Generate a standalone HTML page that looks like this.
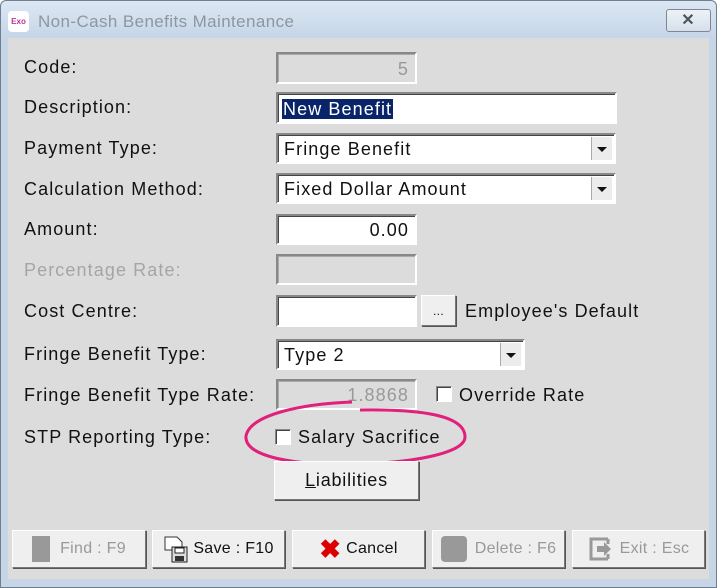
<!DOCTYPE html>
<html><head><style>
body{margin:0;width:717px;height:588px;overflow:hidden;background:#fff;font-family:"Liberation Sans",sans-serif;letter-spacing:1.1px;}
.win{position:absolute;left:0;top:0;width:715px;height:586px;border:1px solid #6f7f90;border-radius:6px 6px 0 0;background:#c7d6e6;}
.title{position:absolute;left:0;top:0;width:715px;height:38px;background:linear-gradient(#dce7f3,#c5d5e7);border-radius:6px 6px 0 0;}
.title span{position:absolute;left:37px;top:11px;font-size:17px;color:#8d96a1;letter-spacing:0.4px;}
.logo{position:absolute;left:7px;top:10px;width:21px;height:21px;background:#fff;border-radius:4px;font-size:8px;color:#c0309a;font-weight:bold;text-align:center;line-height:21px;letter-spacing:0}
.xb{position:absolute;left:665px;top:8px;width:43px;height:21px;border:1px solid #7b8797;border-radius:3px;background:linear-gradient(#eef2f7,#d6dfea);text-align:center;font-size:16px;line-height:21px;color:#4a5564;font-weight:bold;}
.body{position:absolute;left:8px;top:38px;width:701px;height:541px;background:#dcdcdc;}
.l{position:absolute;left:24px;font-size:18px;color:#111;}
.g{color:#a5a5a5;}
.f{position:absolute;box-sizing:border-box;background:#fff;border:2px solid;border-color:#888 #fff #fff #888;box-shadow:inset 1px 1px 0 #444;font-size:18px;line-height:28px;padding:0 6px;color:#111;}
.dis{background:#dcdcdc;color:#999;text-align:right;box-shadow:inset 1px 1px 0 #aaa;}
.dd{position:absolute;right:2px;top:2px;width:20px;height:23px;background:#ececec;border-left:1px solid #aaa;}
.dd:after{content:"";position:absolute;left:5px;top:10px;border-left:5px solid transparent;border-right:5px solid transparent;border-top:5px solid #111;}
.btn{position:absolute;box-sizing:border-box;background:#efefef;border:1px solid;border-color:#fff #777 #777 #fff;box-shadow:1px 1px 0 #555;font-size:16px;text-align:center;color:#111;letter-spacing:0.3px}
.cb{position:absolute;width:14px;height:14px;background:#fff;border:1px solid;border-color:#888 #fff #fff #888;box-shadow:inset 1px 1px 0 #444;}
.bb{top:530px;height:38px;line-height:36px;}
</style></head><body>
<div class="win">
<div class="title"><div class="logo">Exo</div><span>Non-Cash Benefits Maintenance</span><div class="xb">✕</div></div>
</div>
<div class="body"></div>
<div class="l" style="top:57px">Code:</div>
<div class="f dis" style="left:276px;top:52px;width:141px;height:32px;line-height:30px">5</div>
<div class="l" style="top:97px">Description:</div>
<div class="f" style="left:276px;top:92px;width:341px;height:32px;padding-left:4px;line-height:30px"><span style="background:#0a246a;color:#fff;padding:0 1px">New Benefit</span></div>
<div class="l" style="top:138px">Payment Type:</div>
<div class="f" style="left:276px;top:133px;width:340px;height:31px">Fringe Benefit<div class="dd"></div></div>
<div class="l" style="top:179px">Calculation Method:</div>
<div class="f" style="left:276px;top:173px;width:340px;height:31px">Fixed Dollar Amount<div class="dd"></div></div>
<div class="l" style="top:219px">Amount:</div>
<div class="f" style="left:276px;top:214px;width:141px;height:31px;text-align:right">0.00</div>
<div class="l g" style="top:260px">Percentage Rate:</div>
<div class="f dis" style="left:276px;top:254px;width:141px;height:31px"></div>
<div class="l" style="top:301px">Cost Centre:</div>
<div class="f" style="left:276px;top:295px;width:141px;height:32px"></div>
<div class="btn" style="left:421px;top:295px;width:35px;height:31px;line-height:30px;font-size:12px">...</div>
<div class="l" style="left:465px;top:301px">Employee's Default</div>
<div class="l" style="top:344px">Fringe Benefit Type:</div>
<div class="f" style="left:276px;top:339px;width:249px;height:31px">Type 2<div class="dd"></div></div>
<div class="l" style="top:385px">Fringe Benefit Type Rate:</div>
<div class="f dis" style="left:276px;top:379px;width:141px;height:31px">1.8868</div>
<div class="cb" style="left:436px;top:386px"></div>
<div class="l" style="left:459px;top:385px">Override Rate</div>
<div class="l" style="top:427px">STP Reporting Type:</div>
<div class="cb" style="left:275px;top:429px"></div>
<div class="l" style="left:298px;top:427px">Salary Sacrifice</div>
<svg style="position:absolute;left:0;top:0" width="717" height="588"><path d="M352,402 C300,404 250,415 246,436 C244,458 300,466 360,464 C420,462 465,452 465,437 C465,415 420,409 360,410" fill="none" stroke="#e0207a" stroke-width="3"/></svg>
<div class="btn" style="left:274px;top:461px;width:145px;height:39px;line-height:37px;font-size:18px;letter-spacing:0.8px"><u>L</u>iabilities</div>
<div class="btn bb" style="left:12px;width:134px;color:#999"><span style="display:inline-block;width:18px;height:26px;background:#999;vertical-align:middle;margin-right:10px"></span>Find : F9</div>
<div class="btn bb" style="left:152px;width:133px"><svg width="26" height="28" style="vertical-align:middle;margin-right:4px"><path d="M2,2h12l5,5v8H2z" fill="#fff" stroke="#333"/><rect x="9" y="12" width="15" height="15" fill="#ddd" stroke="#222"/><rect x="12" y="13" width="9" height="5" fill="#fff" stroke="#222"/><rect x="12" y="21" width="9" height="5" fill="#333"/></svg>Save : F10</div>
<div class="btn bb" style="left:292px;width:133px"><span style="color:#d00;font-weight:bold;font-size:26px;vertical-align:middle">✖</span> Cancel</div>
<div class="btn bb" style="left:432px;width:133px;color:#999"><span style="display:inline-block;width:26px;height:26px;background:#999;border-radius:4px;vertical-align:middle;margin-right:8px"></span>Delete : F6</div>
<div class="btn bb" style="left:572px;width:133px;color:#999"><svg width="26" height="26" style="vertical-align:middle;margin-right:6px"><path d="M20,3H3v20h17M20,3v5M20,18v5" fill="none" stroke="#999" stroke-width="3"/><path d="M9,10h7v-4l7,7-7,7v-4H9z" fill="#999"/></svg>Exit : Esc</div>
</body></html>
